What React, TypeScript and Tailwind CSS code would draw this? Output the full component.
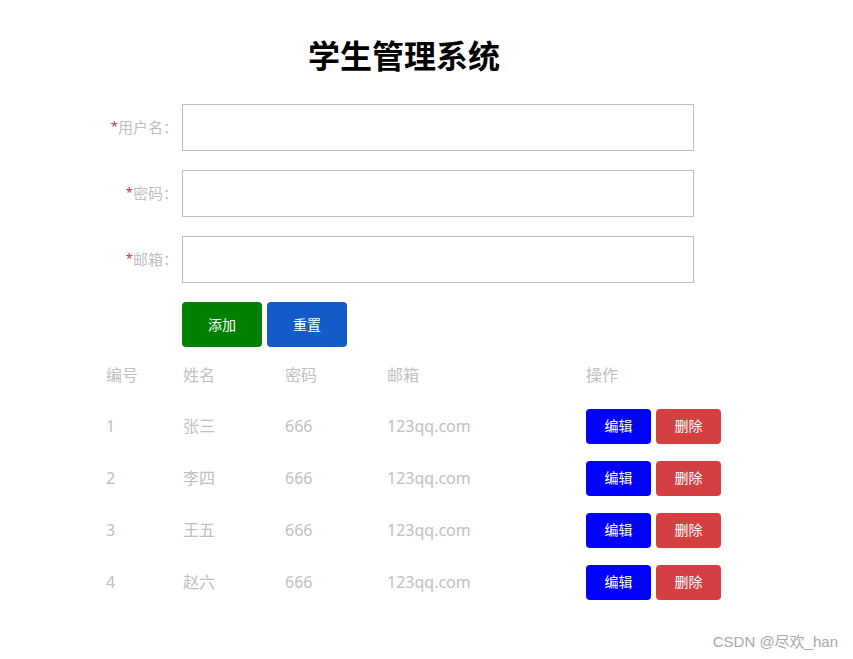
const font = { fontFamily: '"Noto Sans", "Noto Sans CJK SC", sans-serif' };

const students = [
  { id: 1, name: "张三", password: "666", email: "123qq.com" },
  { id: 2, name: "李四", password: "666", email: "123qq.com" },
  { id: 3, name: "王五", password: "666", email: "123qq.com" },
  { id: 4, name: "赵六", password: "666", email: "123qq.com" },
];

function Field({ label }: { label: string }) {
  return (
    <div className="flex items-center">
      <label className="w-[178px] text-right text-[15px] text-[#c0c0c0] leading-none">
        <span className="text-[#b83a3a] text-[13px] align-top">*</span>
        {label}：
      </label>
      <input className="ml-[4px] h-[47px] w-[512px] border border-[#c0c0c0] outline-none px-2" />
    </div>
  );
}

export default function App() {
  return (
    <div className="relative w-[853px] h-[659px] bg-white" style={font}>
      <div className="w-[808px]">
        <h1 className="pt-[34px] text-center text-[32px] font-bold leading-[44px] text-black">学生管理系统</h1>

        <div className="mt-[26px] flex flex-col gap-[19px]">
          <Field label="用户名" />
          <Field label="密码" />
          <Field label="邮箱" />
          <div className="ml-[182px] flex gap-[5px]">
            <button className="h-[45px] w-[80px] rounded-[4px] bg-[#008000] text-sm text-white">添加</button>
            <button className="h-[45px] w-[80px] rounded-[4px] bg-[#125bc8] text-sm text-white">重置</button>
          </div>
        </div>

        <table className="mt-[3px] ml-[106px] border-collapse text-base text-[#c0c0c0]">
          <thead>
            <tr className="h-[50px] text-left">
              <th className="w-[77px] p-0 font-normal">编号</th>
              <th className="w-[102px] p-0 font-normal">姓名</th>
              <th className="w-[102px] p-0 font-normal">密码</th>
              <th className="w-[199px] p-0 font-normal">邮箱</th>
              <th className="p-0 font-normal">操作</th>
            </tr>
          </thead>
          <tbody>
            {students.map((s) => (
              <tr key={s.id} className="h-[52px]">
                <td className="p-0">{s.id}</td>
                <td className="p-0">{s.name}</td>
                <td className="p-0">{s.password}</td>
                <td className="p-0">{s.email}</td>
                <td className="p-0">
                  <div className="flex gap-[5px]">
                    <button className="h-[35px] w-[65px] rounded-[4px] bg-[#0000ff] text-sm text-white">编辑</button>
                    <button className="h-[35px] w-[65px] rounded-[4px] bg-[#d63f42] text-sm text-white">删除</button>
                  </div>
                </td>
              </tr>
            ))}
          </tbody>
        </table>
      </div>

      <div
        className="absolute right-[15px] bottom-[6px] text-[15px] text-[#a8a8a8]"
        style={{ fontFamily: '"Liberation Sans", "Noto Sans CJK SC", sans-serif' }}
      >
        CSDN @尽欢_han
      </div>
    </div>
  );
}
